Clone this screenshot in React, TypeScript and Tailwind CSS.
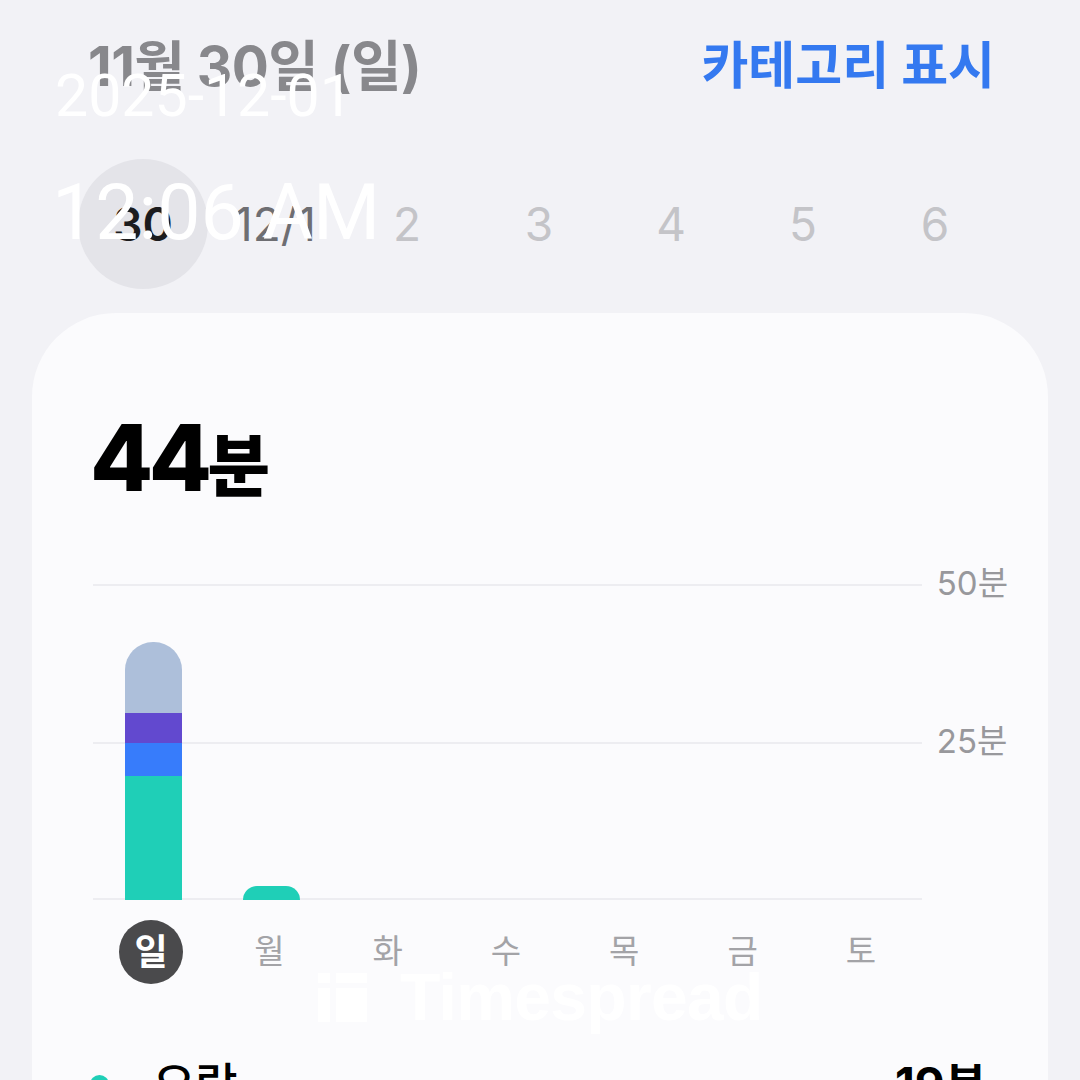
import React from 'react'

const KR = "font-['Inter','Noto_Sans_CJK_KR',sans-serif]"

const DATES = ['30', '12/1', '2', '3', '4', '5', '6']
const DAYS = ['일', '월', '화', '수', '목', '금', '토']

type Seg = { h: number; color: string }

// stacked bars, bottom segment first, heights in px
const BARS: Seg[][] = [
  [
    { h: 124, color: 'bg-[#1fcfb7]' },
    { h: 33, color: 'bg-[#377cfb]' },
    { h: 30, color: 'bg-[#6249cf]' },
    { h: 71, color: 'bg-[#adbfda]' },
  ],
  [{ h: 14, color: 'bg-[#1fcfb7]' }],
  [],
  [],
  [],
  [],
  [],
]

function Bar({ segs }: { segs: Seg[] }) {
  if (!segs.length) return null
  return (
    <div className="flex w-[57px] flex-col-reverse overflow-hidden rounded-t-[28px]">
      {segs.map((s, i) => (
        <div key={i} className={s.color} style={{ height: s.h }} />
      ))}
    </div>
  )
}

function Watermark() {
  return (
    <div className="pointer-events-none absolute left-[318px] top-[964px] flex items-center gap-[33px] text-white">
      <svg width="49" height="49" viewBox="0 0 49 49" fill="white">
        <rect x="0" y="0" width="12" height="10" />
        <rect x="0" y="15" width="12" height="34" />
        <rect x="18" y="0" width="31" height="10" />
        <rect x="18" y="15" width="31" height="34" />
      </svg>
      <span className="font-['Liberation_Sans',sans-serif] text-[66px] font-bold leading-none tracking-[-0.01em]">
        Timespread
      </span>
    </div>
  )
}

export default function App() {
  return (
    <div className={`relative h-[1080px] w-[1080px] overflow-hidden bg-[#f2f2f6] ${KR}`}>
      {/* header */}
      <div className="flex items-center justify-between pl-[88px] pr-[85px] pt-[31px]">
        <span className="text-[55px] font-bold leading-[70px] tracking-[-0.01em] text-[#88888c]">11월 30일 (일)</span>
        <span className="text-[51px] font-bold leading-[70px] text-[#3479f0]">카테고리 표시</span>
      </div>

      {/* date strip */}
      <div className="mt-[58px] flex pl-[77px]">
        {DATES.map((d, i) => (
          <div key={d} className="flex h-[130px] w-[132px] items-center justify-center">
            {i === 0 ? (
              <div className="flex h-[130px] w-[130px] items-center justify-center rounded-full bg-[#e4e4e9] text-[46px] font-semibold text-[#1c1c1e]">
                {d}
              </div>
            ) : (
              <span className={i === 1 ? 'text-[46px] text-[#6e6e72]' : 'text-[46px] text-[#c4c4c8]'}>{d}</span>
            )}
          </div>
        ))}
      </div>

      {/* card */}
      <div className="mx-[32px] mt-[24px] rounded-t-[84px] bg-[#fbfbfd] pl-[58px] pr-[40px] pt-[90px]">
        <div className="flex items-baseline text-[92px] font-extrabold leading-[110px] tracking-[-0.05em] text-black">
          <span>44</span>
          <span className="text-[68px]">분</span>
        </div>

        <div className="mt-[63px] flex pl-[3px]">
          {/* plot */}
          <div className="relative h-[316px] w-[829px]">
            <div className="absolute inset-x-0 top-0 h-[2px] bg-[#ededf1]" />
            <div className="absolute inset-x-0 top-[158px] h-[2px] bg-[#ededf1]" />
            <div className="absolute inset-x-0 bottom-0 h-[2px] bg-[#ededf1]" />
            <div className="relative grid h-full grid-cols-7 items-end pl-[1px]">
              {BARS.map((b, i) => (
                <div key={i} className="flex justify-center">
                  <Bar segs={b} />
                </div>
              ))}
            </div>
          </div>
          {/* axis labels */}
          <div className="ml-[15px] flex h-[316px] flex-col justify-between text-[33px] text-[#98989c]">
            <div className="flex h-0 items-center">50분</div>
            <div className="flex h-0 items-center">25분</div>
            <div className="h-0" />
          </div>
        </div>

        {/* weekday labels */}
        <div className="mt-[20px] grid w-[830px] grid-cols-7 pl-[2px]">
          {DAYS.map((d, i) => (
            <div key={d} className="flex h-[64px] items-center justify-center">
              {i === 0 ? (
                <div className="flex h-[64px] w-[64px] items-center justify-center rounded-full bg-[#4a4a4c] text-[36px] font-bold text-white">
                  {d}
                </div>
              ) : (
                <span className="text-[33px] text-[#a3a3a7]">{d}</span>
              )}
            </div>
          ))}
        </div>

        {/* category list */}
        <div className="mt-[66px] flex items-center justify-between pr-[21px]">
          <div className="flex items-center gap-[44px]">
            <div className="h-[19px] w-[19px] rounded-full bg-[#1fcfb7]" />
            <span className="text-[46px] font-medium text-black">오락</span>
          </div>
          <span className="text-[46px] font-bold text-black">19분</span>
        </div>
        <div className="h-[200px]" />
      </div>

      <Watermark />

      {/* capture timestamp overlay */}
      <div className="pointer-events-none absolute left-[55px] top-[63px] font-['Roboto',sans-serif] text-[59px] leading-[66px] text-white">
        2025-12-01
      </div>
      <div className="pointer-events-none absolute left-[52px] top-[169px] font-['Roboto',sans-serif] text-[77px] leading-[88px] text-white">
        12:06 AM
      </div>
    </div>
  )
}
